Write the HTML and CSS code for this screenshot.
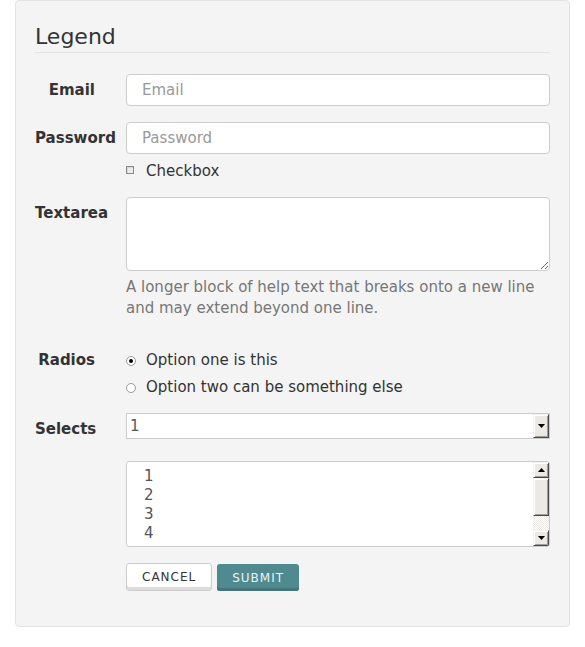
FILE: index.html
```html
<!DOCTYPE html>
<html lang="en">
<head>
<meta charset="utf-8">
<title>Form</title>
<link rel="stylesheet" href="styles.css">
</head>
<body>
<form class="panel">
  <div class="legend">Legend</div>

  <div class="row">
    <label class="label" for="email">Email</label>
    <div class="control">
      <input id="email" class="input" type="email" placeholder="Email">
    </div>
  </div>

  <div class="row row-password">
    <label class="label" for="password">Password</label>
    <div class="control">
      <input id="password" class="input" type="password" placeholder="Password">
      <label class="check"><input type="checkbox"><span>Checkbox</span></label>
    </div>
  </div>

  <div class="row row-textarea">
    <label class="label" for="ta">Textarea</label>
    <div class="control">
      <textarea id="ta" class="textarea"></textarea>
      <p class="help">A longer block of help text that breaks onto a new line and may extend beyond one line.</p>
    </div>
  </div>

  <div class="row row-radios">
    <span class="label label-radios">Radios</span>
    <div class="control">
      <label class="radio"><input type="radio" name="opt" checked><span>Option one is this</span></label>
      <label class="radio"><input type="radio" name="opt"><span>Option two can be something else</span></label>
    </div>
  </div>

  <div class="row row-select">
    <span class="label">Selects</span>
    <div class="control">
      <div class="select">
        <span class="select-value">1</span>
        <span class="bevel sel-btn">
          <svg width="7" height="4" viewBox="0 0 7 4"><polygon points="0,0 7,0 3.5,4" fill="#000"/></svg>
        </span>
      </div>
    </div>
  </div>

  <div class="row row-multi">
    <span></span>
    <div class="control">
      <div class="multi">
        <div class="multi-list">
          <div>1</div>
          <div>2</div>
          <div>3</div>
          <div>4</div>
        </div>
        <div class="scrollbar">
          <span class="bevel sb-btn">
            <svg width="7" height="4" viewBox="0 0 7 4"><polygon points="0,4 7,4 3.5,0" fill="#000"/></svg>
          </span>
          <span class="bevel sb-thumb"></span>
          <span class="sb-track"></span>
          <span class="bevel sb-btn">
            <svg width="7" height="4" viewBox="0 0 7 4"><polygon points="0,0 7,0 3.5,4" fill="#000"/></svg>
          </span>
        </div>
      </div>
    </div>
  </div>

  <div class="row row-actions">
    <span></span>
    <div class="actions">
      <button type="button" class="btn btn-cancel">Cancel</button>
      <button type="submit" class="btn btn-submit">Submit</button>
    </div>
  </div>
</form>
</body>
</html>
```

FILE: styles.css
```css
* { box-sizing: border-box; }

html, body {
  margin: 0;
  padding: 0;
  background: #fff;
}

body {
  font-family: "DejaVu Sans", "Liberation Sans", sans-serif;
  font-size: 15px;
  color: #333;
}

.panel {
  margin: 0 15px;
  padding: 23px 19px 35px;
  background: #f4f4f4;
  border: 1px solid #e3e3e3;
  border-radius: 4px;
}

.legend {
  font-size: 22px;
  line-height: 26px;
  padding-bottom: 2px;
  border-bottom: 1px solid #e2e2e2;
  margin-bottom: 21px;
  color: #333;
}

.row {
  display: grid;
  grid-template-columns: 60px 1fr;
  column-gap: 31px;
  align-items: start;
}

.row-password { margin-top: 16px; }
.row-textarea { margin-top: 16px; }
.row-radios { margin-top: 28px; }
.row-select { margin-top: 12px; }
.row-multi { margin-top: 16px; }
.row-actions { margin-top: 16px; }

.label {
  font-weight: bold;
  text-align: right;
  line-height: 32px;
  white-space: nowrap;
  color: #333;
}

.label-radios { line-height: 27px; }

.control { min-width: 0; }

.input {
  display: block;
  width: 100%;
  height: 32px;
  margin: 0;
  padding: 0 15px;
  border: 1px solid #ccc;
  border-radius: 4px;
  background: #fff;
  font: inherit;
  color: #555;
  outline: none;
}

.input::placeholder { color: #999; }

.check {
  display: flex;
  align-items: center;
  gap: 12px;
  margin-top: 7px;
  line-height: 20px;
}

.check input {
  appearance: none;
  -webkit-appearance: none;
  margin: 0 0 2px;
  width: 8px;
  height: 8px;
  border: 1px solid #8a8a8a;
  background: #ececec;
  box-shadow: inset 1px 1px 0 #d6d6d6;
}

.textarea {
  display: block;
  width: 100%;
  height: 74px;
  margin: 0;
  padding: 6px 15px;
  border: 1px solid #ccc;
  border-radius: 4px;
  background: #fff;
  font: inherit;
  color: #555;
  resize: vertical;
  outline: none;
}

.help {
  margin: 6px 0 0;
  line-height: 21px;
  color: #777;
}

.radio {
  display: flex;
  align-items: center;
  gap: 10px;
  line-height: 27px;
}

.radio input {
  appearance: none;
  -webkit-appearance: none;
  margin: 0;
  width: 10px;
  height: 10px;
  border: 1px solid #9a9a9a;
  border-radius: 50%;
  background: #fff;
  display: grid;
  place-content: center;
}

.radio input:checked::before {
  content: "";
  width: 4px;
  height: 4px;
  border-radius: 50%;
  background: #000;
}

.select {
  display: flex;
  height: 26px;
  border: 1px solid #ccc;
  background: #fff;
  color: #555;
  line-height: 24px;
  padding-left: 3px;
}

.select-value { flex: 1; }

.bevel {
  display: flex;
  align-items: center;
  justify-content: center;
  background: #ece9e4;
  border: 1px solid;
  border-color: #f4f3f1 #4a4a4a #4a4a4a #f4f3f1;
  box-shadow: inset 1px 1px 0 #fff, inset -1px -1px 0 #a09e9a;
}

.sel-btn {
  width: 16px;
  height: 24px;
}

.multi {
  display: flex;
  height: 86px;
  border: 1px solid #ccc;
  border-radius: 3px;
  background: #fff;
  color: #555;
  overflow: hidden;
}

.multi-list {
  flex: 1;
  padding: 5px 0 0 17px;
  line-height: 19px;
  overflow: hidden;
}

.scrollbar {
  width: 16px;
  display: flex;
  flex-direction: column;
}

.sb-btn { height: 16px; flex: none; }
.sb-thumb { height: 38px; flex: none; }

.sb-track {
  flex: 1;
  background: repeating-conic-gradient(#ece9e4 0 25%, #fff 0 50%) 0 0 / 2px 2px;
}

.actions {
  display: flex;
  align-items: flex-end;
  gap: 5px;
}

.btn {
  margin: 0;
  padding: 0 15px;
  font-family: "DejaVu Sans", sans-serif;
  font-size: 12px;
  letter-spacing: 1px;
  text-transform: uppercase;
  border-radius: 3px;
  cursor: pointer;
}

.btn-cancel {
  height: 28px;
  border: 1px solid #ccc;
  background: #fff;
  color: #333;
  box-shadow: inset 0 -3px 0 #dcdcdc;
}

.btn-submit {
  height: 27px;
  border: 0;
  background: #4f8a90;
  color: #eef4f4;
  box-shadow: inset 0 -3px 0 #42767b;
}
```
